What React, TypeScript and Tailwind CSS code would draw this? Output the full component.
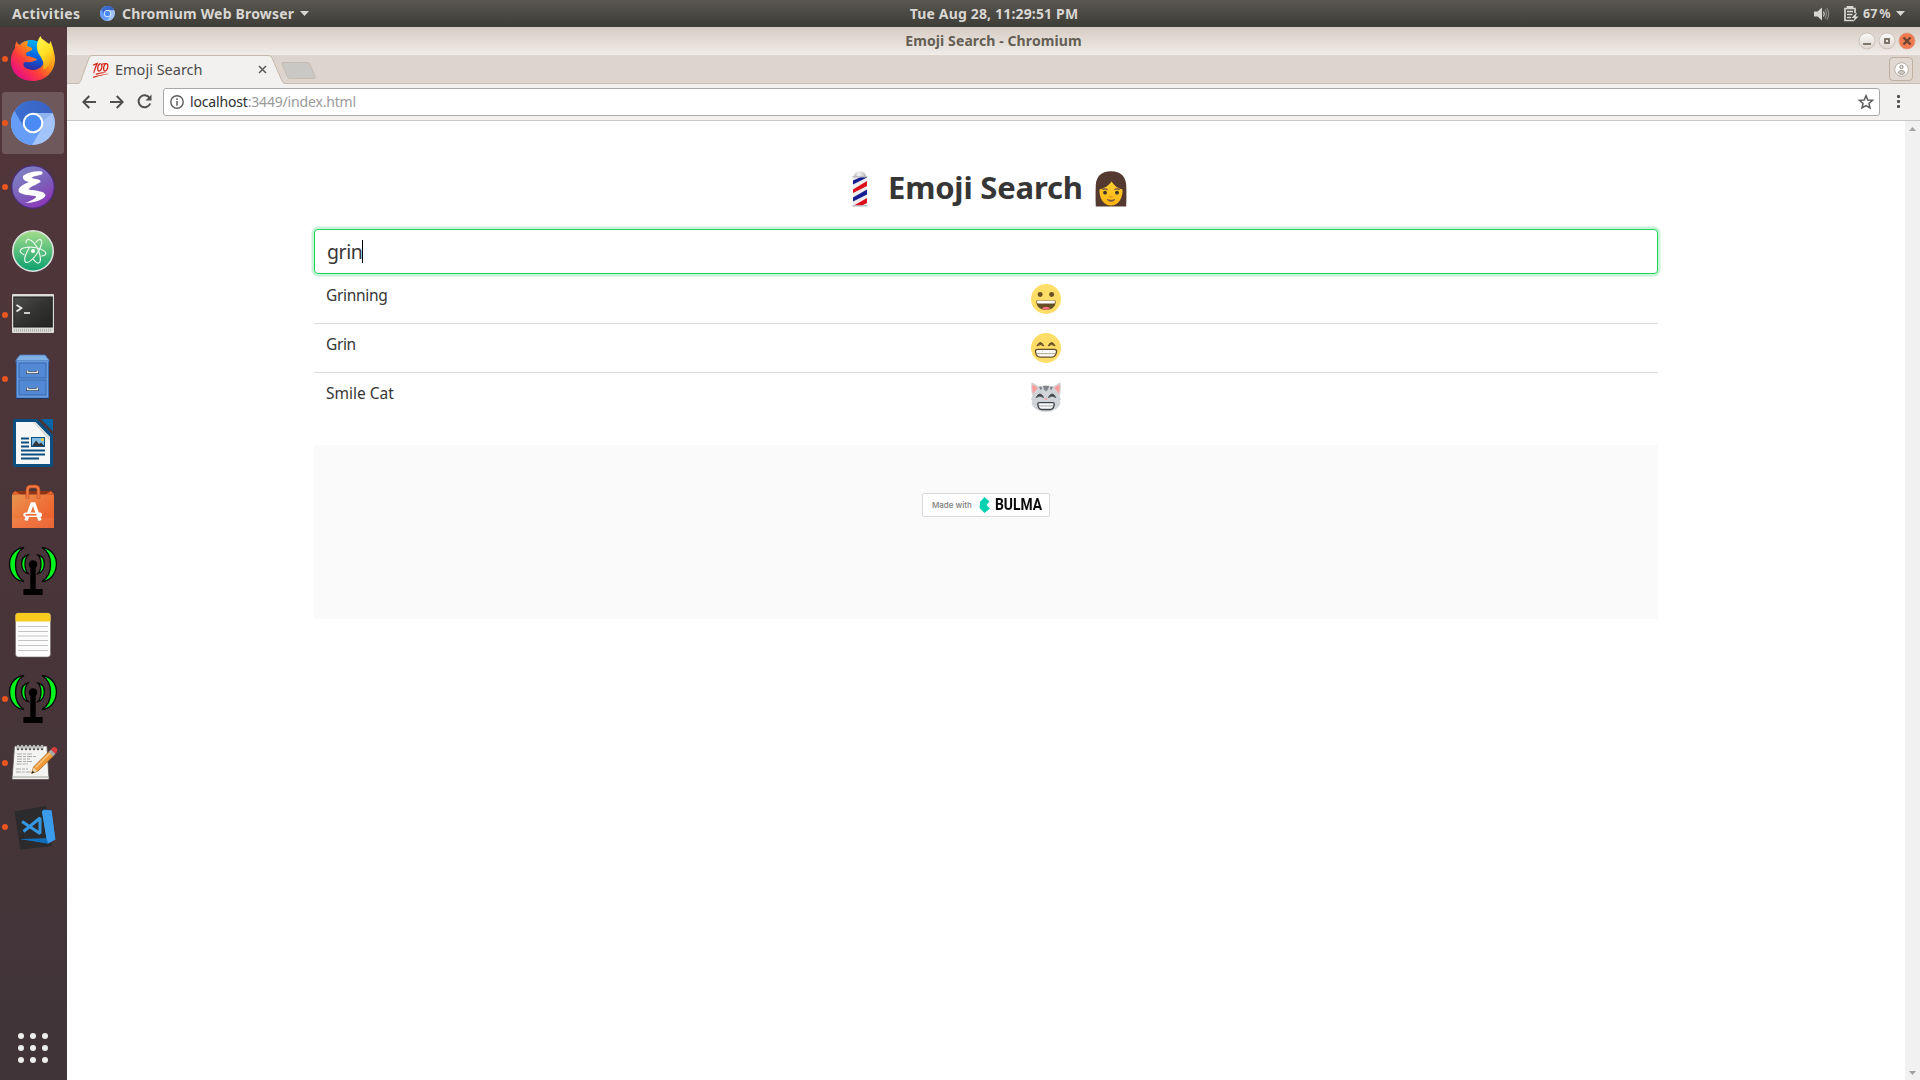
import React from "react";

/* ---------- Launcher icons, each drawn in a 67x64 slot ---------- */

const slot = "block h-16 w-[67px]";

function Firefox() {
  return (
    <svg viewBox="0 0 67 64" className={slot}>
      <defs>
        <linearGradient id="ffBody" x1="0.85" y1="0.1" x2="0.15" y2="0.8">
          <stop offset="0" stopColor="#ffd226" />
          <stop offset="0.4" stopColor="#ff8a16" />
          <stop offset="0.7" stopColor="#ff3b3c" />
          <stop offset="1" stopColor="#e9157b" />
        </linearGradient>
        <linearGradient id="ffGlobe" x1="0.6" y1="0" x2="0.4" y2="1">
          <stop offset="0" stopColor="#00b3f4" />
          <stop offset="0.5" stopColor="#0660e0" />
          <stop offset="1" stopColor="#3b1a8c" />
        </linearGradient>
        <linearGradient id="ffTail" x1="0.3" y1="0" x2="0.7" y2="1">
          <stop offset="0" stopColor="#fff44f" />
          <stop offset="0.5" stopColor="#ffdf22" />
          <stop offset="1" stopColor="#ff9a12" />
        </linearGradient>
      </defs>
      <circle cx="31" cy="29.500" r="16.500" fill="url(#ffGlobe)" />
      <path d="M17 14 C15 17 15 19 15 21 C10 28 9.500 38 14 45 C18 51 25 54 33 54 C45 54 55 45 55 32 C55 22 48 15 42 12 C44 18 46 25 45 31 C44 41 36 45 28 42 C22 40 22 34 27 35 C31 36 33 34 37 33 C36 30 31 31 29 29 C27 30 26 28 26 26 L32 23 C33 21 31 20 27 19 L28 14 C24 14 21 16 20 18 C18 17 17 16 17 14Z" fill="url(#ffBody)" />
      <path d="M40.500 9 C36 15 36 22 39 27 C42 32 45 36 43 43 C52 38 55 29 53 21 C52 18 51 16 51 14 L49 17 C45 15 42 13 40.500 9Z" fill="url(#ffTail)" />
    </svg>
  );
}

function ChromiumArt({ prefix }: { prefix: string }) {
  return (
    <>
      <defs>
        <linearGradient id={prefix + "Top"} x1="0" y1="0" x2="1" y2="0.3">
          <stop offset="0" stopColor="#3b6fd4" />
          <stop offset="1" stopColor="#3a62c0" />
        </linearGradient>
      </defs>
      <circle cx="33" cy="32" r="22" fill="#a3c4fb" />
      <path d="M33 32 L14 20.800 A22 22 0 0 0 32 54 L42 37Z" fill="#669df6" />
      <path d="M33 22 L53 22 A22 22 0 0 0 14.500 20 L24 36Z" fill={`url(#${prefix}Top)`} />
      <path d="M38 22 L53 22 L43 30Z" fill="#7fa4e8" opacity=".5" />
      <circle cx="33" cy="32" r="10.300" fill="#fff" />
      <circle cx="33" cy="32" r="8.300" fill="#4a8af4" />
    </>
  );
}

function Chromium() {
  return (
    <svg viewBox="0 0 67 64" className={slot}>
      <ChromiumArt prefix="crDock" />
    </svg>
  );
}

function Emacs() {
  return (
    <svg viewBox="0 0 67 64" className={slot}>
      <defs>
        <linearGradient id="emacs" x1="0.2" y1="0" x2="0.8" y2="1">
          <stop offset="0" stopColor="#8085c6" />
          <stop offset="0.55" stopColor="#7c5db9" />
          <stop offset="1" stopColor="#9130b8" />
        </linearGradient>
      </defs>
      <circle cx="33" cy="32" r="21.300" fill="url(#emacs)" stroke="#4b2d78" strokeWidth="1.300" />
      <path d="M41.500 16.500 C36 15.800 29 17 23.500 20.500 C21.500 23 24 26 29 27 C25 28.500 18 32 18.500 36 C19 39.500 28 40 35.500 41 C38 42.500 31 46 25 48 C33 48 44 45 45.500 40.500 C46 36.500 36 35.500 28.500 34.500 C30 31.500 36 30 40.500 27 C41.500 24 34 24 31.500 23 C33 20.500 40 21 42 19 C43 18 42.500 16.600 41.500 16.500Z" fill="#fff" />
    </svg>
  );
}

function Atom() {
  return (
    <svg viewBox="0 0 67 64" className={slot}>
      <defs>
        <linearGradient id="atom" x1="0" y1="0" x2="0" y2="1">
          <stop offset="0" stopColor="#a5dd8c" />
          <stop offset="1" stopColor="#0aa06e" />
        </linearGradient>
      </defs>
      <circle cx="33" cy="32" r="20.200" fill="url(#atom)" stroke="#dfe3e0" strokeWidth="1.600" />
      <g fill="none" stroke="#e6f7ea" strokeWidth="1.200" strokeLinecap="round">
        <path d="M24 35.800C21 34.500 19.500 32.500 20.500 31C22.500 28 30 27.500 37 29C43 30.500 47 33 45.500 35.500C45 36.300 43.500 36.800 41.500 37" />
        <path d="M26 24C26 21.500 27 20 29 20.500C32.500 21 37 27 39 33C41 39 41 43.500 38.500 44C37 44.300 35 42.500 33.500 40.500" />
        <path d="M36 23C38 20.700 40 19.800 41 21C43 23 40.500 30 36 36C32 41.500 27.500 44.500 25.500 43C23.500 41 25.500 34.500 29.500 28.500" />
      </g>
      <circle cx="33" cy="32" r="2" fill="#fff" />
    </svg>
  );
}

function Terminal() {
  return (
    <svg viewBox="0 0 67 64" className={slot}>
      <defs>
        <linearGradient id="term" x1="0" y1="0" x2="1" y2="1">
          <stop offset="0" stopColor="#4c4e4b" />
          <stop offset="0.5" stopColor="#333432" />
          <stop offset="1" stopColor="#232322" />
        </linearGradient>
      </defs>
      <rect x="12" y="11" width="42" height="39" rx="1" fill="#dcdcda" />
      <rect x="13.300" y="13.500" width="39.500" height="31" fill="#191919" />
      <rect x="14.300" y="14.500" width="37.500" height="29" fill="url(#term)" />
      <path d="M16.500 22 L21.500 25 L16.500 28.500" fill="none" stroke="#f2f2f2" strokeWidth="1.600" />
      <path d="M24 30 H30" stroke="#f2f2f2" strokeWidth="1.600" />
      <path d="M14 47.300 H52" stroke="#b4b5b2" strokeWidth="3" strokeDasharray="1 1" />
    </svg>
  );
}

function Files() {
  return (
    <svg viewBox="0 0 67 64" className={slot}>
      <path d="M20 8 H45 L49 13 V16 H16 V13Z" fill="#7fb0e6" stroke="#4a7cc0" strokeWidth=".8" />
      <rect x="16" y="13.500" width="33" height="38" rx="1" fill="#3a6db8" />
      <rect x="17" y="14" width="31" height="36.500" fill="#6a9bdd" />
      <rect x="19" y="16" width="27" height="15" fill="#5388d4" stroke="#3768b0" />
      <rect x="19" y="33" width="27" height="15" fill="#5388d4" stroke="#3768b0" />
      {[23.5, 40.5].map((y) => (
        <g key={y} transform={`translate(27.500 ${y})`}>
          <path d="M0 0 V2 H10 V0" fill="none" stroke="#2e4260" strokeWidth="3" />
          <path d="M0 0 V2 H10 V0" fill="none" stroke="#e4e6e2" strokeWidth="1.500" />
        </g>
      ))}
      <path d="M16 51.500 H49" stroke="#223a60" strokeWidth="1" />
    </svg>
  );
}

function Writer() {
  return (
    <svg viewBox="0 0 67 64" className={slot}>
      <path d="M15 8 H37 L53 24 V54 Q53 56 51 56 H15 Q13 56 13 54 V10 Q13 8 15 8Z" fill="#0a4f80" />
      <path d="M41 8 H53 V20.500Z" fill="#0966a4" />
      <path d="M16 11 H35.500 L50 26 V53 H16Z" fill="#f7f7f7" />
      <path d="M35.500 11 L50 26 V30 L33 11Z" fill="#d8dadb" />
      <g stroke="#0b4f80" strokeWidth="2">
        <path d="M21 27.500 H29 M21 31.500 H29 M21 35.500 H29 M21 39.500 H45 M21 43.500 H45 M21 47.500 H39" />
      </g>
      <rect x="31.500" y="26.500" width="13" height="9" fill="#84bde4" stroke="#0b4f80" />
      <path d="M32 35 L36 29.500 L39 33 L41 31.500 L44.500 35Z" fill="#33373b" />
      <circle cx="42.500" cy="28.500" r="1.500" fill="#f7cf3c" />
    </svg>
  );
}

function Software() {
  return (
    <svg viewBox="0 0 67 64" className={slot}>
      <defs>
        <linearGradient id="bag" x1="0" y1="0" x2="1" y2="1">
          <stop offset="0" stopColor="#e99551" />
          <stop offset="0.6" stopColor="#ee6c33" />
          <stop offset="1" stopColor="#e95c2b" />
        </linearGradient>
      </defs>
      <path d="M15 16 H51 L54 20 H12Z" fill="#8f3415" />
      <path d="M12 19 L15 16 L21 20Z M54 19 L51 16 L45 20Z" fill="#e7622f" />
      <rect x="12" y="19.500" width="42" height="33.500" fill="url(#bag)" />
      <path d="M12 43 H54 V53 H12Z" fill="#fff" opacity=".06" />
      <path d="M27.500 23.500 V15 Q27.500 11.500 31 11.500 H35 Q38.500 11.500 38.500 15 V23.500" fill="none" stroke="#c24a1f" strokeWidth="3.600" />
      <path d="M27.500 23 V15 Q27.500 11.500 31 11.500 H35 Q38.500 11.500 38.500 15 V23" fill="none" stroke="#ee7a47" strokeWidth="2.200" />
      <path d="M26 45.500 L32 29 H34 L40 45.500" fill="none" stroke="#fff" strokeWidth="3.400" />
      <rect x="23.500" y="37.500" width="18.500" height="4.500" rx="1.800" fill="#fff" />
      <path d="M25.500 39.800 H36.500" stroke="#ec6b35" strokeWidth="1.700" />
    </svg>
  );
}

function Antenna() {
  return (
    <svg viewBox="0 0 67 64" className={slot}>
      <g stroke="#050805" strokeWidth="1.300" fill="#00f51d">
        <path d="M24 8.500 C12 10 9 20 9.700 27 C10.500 35 16 42 24 42.500 C18 39 15.500 33 15.500 25.500 C15.500 18 18 12 24 8.500Z" />
        <path d="M42 8.500 C54 10 57 20 56.300 27 C55.500 35 50 42 42 42.500 C48 39 50.500 33 50.500 25.500 C50.500 18 48 12 42 8.500Z" />
        <path d="M28 16 C23 17 21.500 21 21.700 25.500 C22 30 24 33.500 28 34.500 C25.500 32 25 29 25 25.300 C25 21.500 25.500 18.500 28 16Z" />
        <path d="M38 16 C43 17 44.500 21 44.300 25.500 C44 30 42 33.500 38 34.500 C40.500 32 41 29 41 25.300 C41 21.500 40.500 18.500 38 16Z" />
      </g>
      <circle cx="33" cy="25.500" r="4.300" fill="#000" />
      <path d="M30.300 26 H35.700 V50 H42.600 V56 H23.400 V50 H30.300Z" fill="#000" />
    </svg>
  );
}

function Notes() {
  return (
    <svg viewBox="0 0 67 64" className={slot}>
      <rect x="15.500" y="10" width="35" height="44" rx="3" fill="#fcfcfc" stroke="#77686b" strokeWidth=".6" />
      <path d="M18.500 10 H47.500 Q50.500 10 50.500 13 V18.500 H15.500 V13 Q15.500 10 18.500 10Z" fill="#facb1f" />
      <path d="M18 23.500 H48 M18 28.500 H48 M18 33 H48 M18 37.500 H48 M18 42.500 H48 M18 47.500 H48" stroke="#c4c4c4" strokeWidth="1" />
    </svg>
  );
}

function TextEditor() {
  return (
    <svg viewBox="0 0 67 64" className={slot}>
      <path d="M14.500 15 H47 L49 48.500 H12Z" fill="#f4f4f2" stroke="#55504e" strokeWidth=".8" />
      <path d="M12.500 46 H48.800" stroke="#b9bcb6" strokeWidth="1.500" />
      <path d="M18 14 v4 M22 14 v4 M26 14 v4 M30 14 v4 M34 14 v4 M38 14 v4 M42 14 v4" stroke="#444" strokeWidth="2.400" strokeLinecap="round" />
      <path d="M18 14 v3.500 M22 14 v3.500 M26 14 v3.500 M30 14 v3.500 M34 14 v3.500 M38 14 v3.500 M42 14 v3.500" stroke="#eee" strokeWidth="1.400" />
      <path d="M17 23 H33 M17 25.500 H36 M17 28 H30 M17 30.500 H33 M16.500 33 H28 M16 38 H28 M16 41 H31" stroke="#a3a3a1" strokeWidth=".9" strokeDasharray="5 1 3 1" />
      <path d="M31.500 42.500 L33.500 36 L49 20.500 L53.500 25 L38 40Z" fill="#f39a36" stroke="#9c5514" strokeWidth=".7" />
      <path d="M35.500 36.500 L50 22" stroke="#fcc780" strokeWidth="1.500" />
      <path d="M31.500 42.500 L33.500 36.500 L37.500 40Z" fill="#ecd0a5" />
      <path d="M31.500 42.500 L32.500 39.700 L34.500 41.500Z" fill="#222" />
      <path d="M48.500 21 L51 18.500 L55.500 22.800 L53 25.500Z" fill="#a9a9a9" />
      <path d="M51 18.500 Q53.500 14.500 56.500 17 Q58.500 19.500 55.500 22.800Z" fill="#dc3d3d" />
    </svg>
  );
}

function Code() {
  return (
    <svg viewBox="0 -1 67 64" className={slot}>
      <path d="M14.500 15.500 L46 10 L52 50 L20.500 53.500Z" fill="#2b2b2d" />
      <path d="M42 15.500 L43.500 13.500 L51.500 14.500 L55.300 43.500 L48 47.500 L20.500 43 L46.500 42.500Z" fill="#2489dc" />
      <path d="M42 15.500 L46.500 42.500 L48 47.500 L55.300 43.500 L51.500 14.500 L45 14Z" fill="#3b9ceb" />
      <path d="M20.500 43 L46.500 42.800 L48 47.500Z" fill="#0f6ebc" />
      <path d="M22 25.500 L40 37.500 V22 L23.500 35.500" fill="none" stroke="#3497e2" strokeWidth="3" strokeLinejoin="bevel" />
    </svg>
  );
}

const LAUNCHERS: { Icon: () => React.JSX.Element; running?: boolean; focused?: boolean }[] = [
  { Icon: Firefox, running: true },
  { Icon: Chromium, running: true, focused: true },
  { Icon: Emacs, running: true },
  { Icon: Atom },
  { Icon: Terminal, running: true },
  { Icon: Files, running: true },
  { Icon: Writer },
  { Icon: Software },
  { Icon: Antenna },
  { Icon: Notes },
  { Icon: Antenna, running: true },
  { Icon: TextEditor, running: true },
  { Icon: Code, running: true },
];

function Dock() {
  return (
    <aside className="flex w-[67px] shrink-0 flex-col justify-between bg-linear-to-b from-[#52363b] to-[#403438]">
      <div>
        {LAUNCHERS.map(({ Icon, running, focused }, i) => (
          <div key={i} className="relative h-16 w-[67px]">
            {focused && <span className="absolute top-px left-[2px] h-[62px] w-[62px] rounded-[3px] bg-[#6e585c]" />}
            <div className="relative"><Icon /></div>
            {running && <span className="absolute top-[29px] left-[2px] h-[6px] w-[6px] rounded-full bg-[#e95420]" />}
          </div>
        ))}
      </div>
      <div className="grid grid-cols-3 gap-[6px] self-start pb-[17px] pl-[18px]">
        {Array.from({ length: 9 }, (_, i) => (
          <span key={i} className="h-[6px] w-[6px] rounded-full bg-[#eeeeec]" />
        ))}
      </div>
    </aside>
  );
}

function TopBar() {
  return (
    <header className="grid h-[27px] shrink-0 grid-cols-[1fr_auto_1fr] items-center bg-linear-to-b from-[#595750] to-[#3d3c37] text-[14px] leading-[26px] font-bold text-[#d9d7d2]">
      <div className="flex items-center pl-3">
        <span className="w-[88px] tracking-[0.34px]">Activities</span>
        <svg viewBox="11 10 44 44" className="h-[15px] w-[15px]">
          <ChromiumArt prefix="crBar" />
        </svg>
        <span className="ml-[7px] tracking-[0.18px]">Chromium Web Browser</span>
        <svg viewBox="0 0 9 5" className="ml-[6px] h-[5px] w-[9px]"><path d="M0 0H9L4.500 5Z" fill="#d9d7d2" /></svg>
      </div>
      <span className="translate-x-[34px] tracking-[0.16px]">Tue Aug 28, 11:29:51 PM</span>
      <div className="flex items-center justify-end pr-[15px]">
        <svg viewBox="0 0 16 14" className="h-[14px] w-4">
          <path d="M0 4.500H3.500L8 0.500V13.500L3.500 9.500H0Z" fill="#d9d7d2" />
          <path d="M9.500 4.500Q11 7 9.500 9.500" fill="none" stroke="#d9d7d2" strokeWidth="1.200" />
          <path d="M11 2.500Q13.700 7 11 11.500 M12.800 1Q16.500 7 12.800 13" fill="none" stroke="#8b8983" strokeWidth="1.200" />
        </svg>
        <svg viewBox="0 0 15 16" className="ml-[14px] h-4 w-[15px]">
          <path d="M3.500 2.500V0.800H8.500V2.500 M9.500 14.500H1V2.500H11V7" fill="none" stroke="#d9d7d2" strokeWidth="1.700" />
          <path d="M3 5.500H9 M3 8.500H8.500 M3 11.500H7" stroke="#d9d7d2" strokeWidth="1.300" />
          <path d="M12 7L7.500 12H10.500L9 16L14.500 10.500H11.500L13 7Z" fill="#d9d7d2" />
        </svg>
        <span className="ml-1 w-[33px] text-[12.5px] [word-spacing:-1.2px]">67 %</span>
        <svg viewBox="0 0 9 5" className="h-[5px] w-[9px]"><path d="M0 0H9L4.500 5Z" fill="#d9d7d2" /></svg>
      </div>
    </header>
  );
}

function WindowTitle() {
  return (
    <div className="grid h-7 shrink-0 grid-cols-[1fr_auto_1fr] items-center bg-linear-to-b from-[#d6ccc4] to-[#f0ece8]">
      <span />
      <span className="text-[14px] leading-7 font-bold tracking-[0.1px] text-[#645e54]">Emoji Search - Chromium</span>
      <svg viewBox="0 0 58 20" className="mr-[4px] h-5 w-[58px] justify-self-end">
        <defs>
          <linearGradient id="btn" x1="0" y1="0" x2="0" y2="1">
            <stop offset="0" stopColor="#fbfaf8" /><stop offset="1" stopColor="#dcd5cd" />
          </linearGradient>
        </defs>
        <circle cx="9" cy="10" r="8" fill="url(#btn)" stroke="#c4bbb1" strokeWidth=".8" />
        <path d="M5 13H13" stroke="#746b60" strokeWidth="1.800" />
        <circle cx="29" cy="10" r="8" fill="url(#btn)" stroke="#c4bbb1" strokeWidth=".8" />
        <rect x="27" y="8" width="4" height="4" fill="none" stroke="#746b60" strokeWidth="1.800" />
        <circle cx="49" cy="10" r="8" fill="#f07a50" stroke="#dd9a80" strokeWidth=".8" />
        <path d="M45.500 6.500L52.500 13.500M52.500 6.500L45.500 13.500" stroke="#6b4335" strokeWidth="2.400" />
      </svg>
    </div>
  );
}

function TabStrip() {
  return (
    <div className="relative flex h-[29px] shrink-0 items-start border-b border-[#c5bbb0] bg-[#ddd4cd]">
      <div className="relative ml-[10px] flex h-[29px] w-[209px] items-center">
        <svg viewBox="0 0 209 29" className="absolute inset-0 h-[29px] w-[209px]">
          <path d="M0 29C3 29 3 27 4 25L12 3Q13 0.500 16 0.500H191Q194 0.500 195 3L205 26Q206 29 209 29Z" fill="#f2f1f0" />
          <path d="M0 28.500C3 28.500 3 27 4 25L12 3Q13 0.500 16 0.500H191Q194 0.500 195 3L205 26Q206 28.500 209 28.500" fill="none" stroke="#c5b9a9" />
        </svg>
        <span className="relative ml-[15px] w-[23px] text-[14px] leading-[29px] brightness-[0.8] contrast-125">💯</span>
        <span className="relative w-[139px] text-[14.5px] leading-[29px] whitespace-nowrap text-[#4c4c4c]">Emoji Search</span>
        <svg viewBox="0 0 9 9" className="relative ml-[4px] h-[9px] w-[9px]"><path d="M1 1L8 8M8 1L1 8" stroke="#5a5a5a" strokeWidth="1.500" /></svg>
      </div>
      <svg viewBox="0 0 36 18" className="-ml-[5px] mt-[7px] h-[18px] w-9">
        <path d="M2 0.500H26Q28 0.500 29 2.500L34 14Q35 16.500 33 16.500H9Q7 16.500 6 14L1 2Q0.500 0.500 2 0.500Z" fill="#cac8c5" stroke="#c6bcae" />
      </svg>
      <div className="mt-[2px] mr-[7px] ml-auto flex h-[24px] w-6 items-center justify-center rounded-[4px] border border-[#bfb09f] bg-[#e0d8d1]">
        <svg viewBox="0 0 15 15" className="h-[15px] w-[15px]">
          <circle cx="7.500" cy="7.500" r="6.800" fill="#fff" stroke="#b5ada2" />
          <circle cx="7.500" cy="5" r="1.700" fill="#e3ddd6" stroke="#9d958b" strokeWidth="1" />
          <path d="M3.800 10.500Q7.500 6.500 11.200 10.500Q7.500 14.500 3.800 10.500Z" fill="#cfc8bf" stroke="#9d958b" strokeWidth="1" />
        </svg>
      </div>
    </div>
  );
}

function Toolbar() {
  return (
    <div className="flex h-[37px] shrink-0 items-center border-b border-[#c9c8c7] bg-[#f2f1f0] pb-px">
      <svg viewBox="0 0 14 14" className="ml-[15px] h-[14px] w-[14px]"><path d="M14 7H1.500M7.300 1L1.300 7L7.300 13" fill="none" stroke="#4f4f4f" strokeWidth="2" /></svg>
      <svg viewBox="0 0 14 14" className="ml-[14px] h-[14px] w-[14px]"><path d="M0 7H12.500M6.700 1L12.700 7L6.700 13" fill="none" stroke="#4f4f4f" strokeWidth="2" /></svg>
      <svg viewBox="0 0 15 15" className="ml-[13px] h-[15px] w-[15px]">
        <path d="M12.600 4A6 6 0 1 0 13.200 9.500" fill="none" stroke="#4f4f4f" strokeWidth="2" />
        <path d="M14.500 0.500V6.500H8.500Z" fill="#4f4f4f" />
      </svg>
      <div className="ml-[11px] flex h-[28px] w-[1717px] items-center rounded-[3px] border border-[#a8a8a8] bg-white">
        <svg viewBox="0 0 14 14" className="ml-[6px] h-[14px] w-[14px]">
          <circle cx="7" cy="7" r="6.200" fill="none" stroke="#5c5c5c" strokeWidth="1.400" />
          <path d="M7 3.300V4.900M7 6.100V10.700" stroke="#5c5c5c" strokeWidth="1.500" />
        </svg>
        <span className="ml-[6px] text-[14px] leading-[26px] tracking-[-0.17px] text-[#9a9a9a]">
          <span className="text-[#303030]">localhost</span>:3449/index.html
        </span>
        <svg viewBox="0 0 24 24" className="mr-[4px] ml-auto h-[18px] w-[18px]">
          <path d="M12 3.500L14.400 9.300L20.700 9.800L15.900 13.900L17.400 20L12 16.700L6.600 20L8.100 13.900L3.300 9.800L9.600 9.300Z" fill="none" stroke="#5c5c5c" strokeWidth="2" />
        </svg>
      </div>
      <div className="ml-[17px] flex flex-col gap-[2px]">
        <span className="h-[3px] w-[3px] rounded-[1px] bg-[#4f4f4f]" />
        <span className="h-[3px] w-[3px] rounded-[1px] bg-[#4f4f4f]" />
        <span className="h-[3px] w-[3px] rounded-[1px] bg-[#4f4f4f]" />
      </div>
    </div>
  );
}

function BarberPole() {
  return (
    <svg viewBox="0 0 16 36" className="h-9 w-4">
      <defs>
        <clipPath id="poleBody"><rect x="1" y="6" width="14" height="28.500" /></clipPath>
        <linearGradient id="poleShade" x1="0" y1="0" x2="1" y2="0">
          <stop offset="0" stopColor="#b5b5b5" />
          <stop offset="0.4" stopColor="#f4f4f4" />
          <stop offset="1" stopColor="#b0b0b0" />
        </linearGradient>
      </defs>
      <path d="M1.500 5.500C2.500 2 5 0.300 8 0.300S13.500 2 14.500 5.500Z" fill="url(#poleShade)" />
      <rect x="1" y="6" width="14" height="28.500" fill="#ededed" />
      <g clipPath="url(#poleBody)">
        <path d="M1 9.500L9 6H15V6.500L1 13.500Z" fill="#141d93" />
        <path d="M1 19.500L15 11V16L1 23Z" fill="#dd0e1c" transform="translate(0 -1)" />
        <path d="M1 27.500L15 19.500V24.500L1 31.500Z" fill="#141d93" transform="translate(0 -1)" />
        <path d="M1 36L15 28V33L1 40Z" fill="#dd0e1c" transform="translate(0 -1)" />
      </g>
      <path d="M0.500 5.800H15.500M0.500 34.800H15.500" stroke="#b3b3b3" strokeWidth="1.200" />
    </svg>
  );
}

function WomanFace() {
  return (
    <svg viewBox="0 0 32 36" className="h-9 w-8">
      <defs>
        <linearGradient id="skin" x1="0" y1="0" x2="0" y2="1">
          <stop offset="0" stopColor="#ffcf33" />
          <stop offset="1" stopColor="#fdb30f" />
        </linearGradient>
      </defs>
      <path d="M16 0.300C6 0.300 1.200 6 0.800 14C0.500 20 0.500 29 0.800 35.500H31.200C31.500 29 31.500 20 31.200 14C30.800 6 26 0.300 16 0.300Z" fill="#543930" />
      <path d="M16.500 10.500C14 14.500 9 17.500 4.500 18.500C4 27 8.500 34.500 16 34.500S28 27 27.500 18.500C23 17.500 19 14.500 16.500 10.500Z" fill="url(#skin)" />
      <path d="M7.500 18.700Q10 17 12.500 18.700M19.500 18.700Q22 17 24.500 18.700" fill="none" stroke="#6d4c41" strokeWidth="1.300" />
      <circle cx="10" cy="21.700" r="1.900" fill="#3d332c" />
      <circle cx="22" cy="21.700" r="1.900" fill="#3d332c" />
      <path d="M14.500 25.200Q16 26.300 17.500 25.200" fill="none" stroke="#df8a1a" strokeWidth="1.200" />
      <path d="M12 28.500Q16 30 20 28.500Q16 32.500 12 28.500Z" fill="#795548" stroke="#795548" strokeWidth=".7" />
    </svg>
  );
}

function GrinningFace() {
  return (
    <svg viewBox="0 0 64 64" className="h-[30px] w-[30px]">
      <circle cx="32" cy="32" r="32" fill="#ffdd67" />
      <circle cx="19.500" cy="22.500" r="5.300" fill="#664e27" />
      <circle cx="44" cy="22.500" r="5.300" fill="#664e27" />
      <path d="M11.500 35H52.500C54 47 45 55 32 55S10 47 11.500 35Z" fill="#664e27" />
      <path d="M13 35.500H51V39.500Q51 41.500 49 41.500H15Q13 41.500 13 39.500Z" fill="#fff" />
      <path d="M23 53Q26 48.500 32 48.500T41 53Q32 56.500 23 53Z" fill="#ff717f" />
    </svg>
  );
}

function GrinFace() {
  return (
    <svg viewBox="0 0 64 64" className="h-[30px] w-[30px]">
      <circle cx="32" cy="32" r="32" fill="#ffdd67" />
      <path d="M12.500 27.500Q20 13 27.500 27.500Q20 22 12.500 27.500ZM36.500 27.500Q44 13 51.500 27.500Q44 22 36.500 27.500Z" fill="#664e27" stroke="#664e27" strokeWidth="2" />
      <path d="M14 35H50Q55 35 54.500 39.500Q53 51.500 44 51.500H20Q11 51.500 9.500 39.500Q9 35 14 35Z" fill="#fff" stroke="#664e27" strokeWidth="3" />
      <path d="M11 44H53" stroke="#8b7a5c" strokeWidth="1.400" />
      <path d="M17.500 36.500V50M24.500 36.500V50M32 36.500V50M39.500 36.500V50M46.500 36.500V50" stroke="#cfc8bb" strokeWidth=".8" />
    </svg>
  );
}

function SmileCat() {
  return (
    <svg viewBox="0 0 64 64" className="h-[30px] w-[30px]">
      <path d="M3 1Q0 0 0.500 5C0 15 1 24 3 30L0 38L3 40L1 46C7 58 18 64 32 64S57 58 63 46L61 40L64 38L61 30C63 24 64 15 63.500 5Q64 0 61 1L46 10Q32 6 18 10Z" fill="#d0d4d8" />
      <path d="M3 5C2 14 3 21 5 25Q9 17 15 13Z" fill="#ff9d9d" />
      <path d="M61 5C62 14 61 21 59 25Q55 17 49 13Z" fill="#ff9d9d" />
      <path d="M25 8H39L36 16L32 20L28 16ZM17 10L22 9L24 15L20 17ZM47 10L42 9L40 15L44 17Z" fill="#83878b" />
      <path d="M11 33Q19 18 27 33Q19 27 11 33ZM37 33Q45 18 53 33Q45 27 37 33Z" fill="#3e4347" stroke="#3e4347" strokeWidth="1.800" />
      <path d="M28.500 35H35.500L32 39Z" fill="#ff8f95" />
      <path d="M18 44H46Q50 44 49.500 48Q48 58.500 41 58.500H23Q16 58.500 14.500 48Q14 44 18 44Z" fill="#fff" stroke="#3e4347" strokeWidth="3" />
      <path d="M16 51H48" stroke="#6e7378" strokeWidth="1.400" />
      <path d="M24 45.500V57M32 45.500V57M40 45.500V57" stroke="#c3c7ca" strokeWidth=".9" />
    </svg>
  );
}

const RESULTS = [
  { name: <span className="tracking-[-0.3px]">Grinning</span>, Face: GrinningFace },
  { name: <span className="tracking-[-0.4px]">Grin</span>, Face: GrinFace },
  { name: <span>Smile Cat</span>, Face: SmileCat },
];

function Page() {
  return (
    <div className="flex flex-1 bg-white">
      <main className="flex flex-1 justify-center">
        <div className="ml-[-10px] w-[1344px] translate-x-[5px]">
          <h1 className="mt-[47px] flex h-[38px] items-center text-[31px] leading-[38px] font-bold text-[#363636]">
            <span className="ml-[538px] w-[36px] pt-[4px]"><BarberPole /></span>
            <span className="w-[207px] tracking-[-0.2px] whitespace-nowrap">Emoji Search</span>
            <span className="pt-[4px]"><WomanFace /></span>
          </h1>
          <div className="mt-[23px] flex h-[45px] items-center rounded-[4px] border border-[#23d160] bg-white pl-[12px] text-[19.5px] leading-[43px] text-[#363636] shadow-[0_0_0_2.500px_rgba(35,209,96,0.25)]">
            <span className="tracking-[-0.45px]">grin</span>
            <span className="h-[23px] w-px bg-black" />
          </div>
          <div className="mt-px divide-y divide-[#dbdbdb]">
            {RESULTS.map(({ name, Face }, i) => (
              <div key={i} className="flex h-[49px] items-start text-[15.5px] leading-6 text-[#363636]">
                <div className="w-[717px] pt-[8px] pl-[12px]">{name}</div>
                <div className="pt-[9px]"><Face /></div>
              </div>
            ))}
          </div>
          <footer className="mt-[23px] flex h-[174px] items-start justify-center bg-[#fafafa] pt-[48px]">
            <div className="flex h-6 w-[128px] items-center rounded-[2px] border border-[#d9d9d9] bg-white">
              <span className="ml-[9px] w-[47px] font-['Inter'] text-[8px] leading-[22px] font-medium whitespace-nowrap text-[#7a7a7a]">Made with</span>
              <svg viewBox="0 0 11 16" className="h-4 w-[11px]"><path d="M0.500 11L1 5L5.500 0L10.500 4.500L7.500 8L11 11.500L5.500 16Z" fill="#00d1b2" /></svg>
              <span className="ml-[5px] w-[46px] origin-left scale-x-[0.84] font-['Roboto'] text-[16.500px] leading-[22px] font-bold text-[#0a0a0a]">BULMA</span>
            </div>
          </footer>
        </div>
      </main>
      <div className="flex w-[15px] flex-col justify-between bg-[#f1f1f1]">
        <svg viewBox="0 0 15 15" className="h-[15px] w-[15px]"><path d="M4 10L7.500 6L11 10Z" fill="#a3a3a3" /></svg>
        <svg viewBox="0 0 15 15" className="h-[15px] w-[15px]"><path d="M4 6L7.500 10L11 6Z" fill="#a3a3a3" /></svg>
      </div>
    </div>
  );
}

export default function App() {
  return (
    <div className="flex h-screen w-full flex-col overflow-hidden font-['Noto_Sans','Noto_Color_Emoji',sans-serif]">
      <TopBar />
      <div className="flex min-h-0 flex-1">
        <Dock />
        <div className="flex min-w-0 flex-1 flex-col">
          <WindowTitle />
          <TabStrip />
          <Toolbar />
          <Page />
        </div>
      </div>
    </div>
  );
}
